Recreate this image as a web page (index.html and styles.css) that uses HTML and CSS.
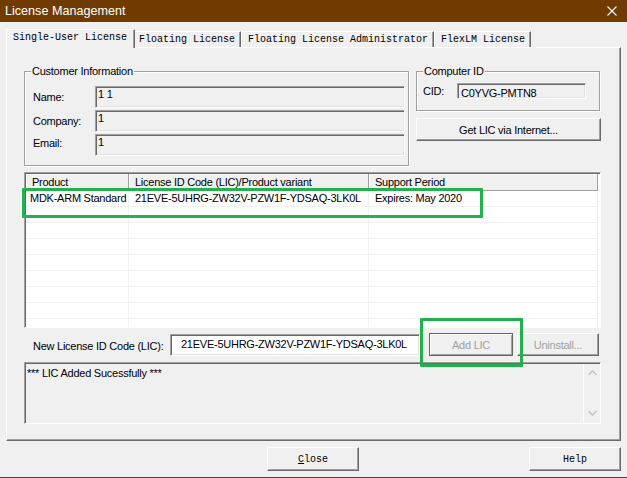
FILE: index.html
```html
<!DOCTYPE html>
<html>
<head>
<meta charset="utf-8">
<title>License Management</title>
<link rel="stylesheet" href="styles.css">
</head>
<body>
<div class="titlebar">
  <span class="title">License Management</span>
  <svg class="close-x" width="10" height="10" viewBox="0 0 10 10"><path d="M0.5 0.5 L9.5 9.5 M9.5 0.5 L0.5 9.5" stroke="#fff" stroke-width="1.1" fill="none"/></svg>
</div>
<div class="tabs">
  <div class="tab active">Single-User License</div>
  <div class="tab">Floating License</div>
  <div class="tab">Floating License Administrator</div>
  <div class="tab">FlexLM License</div>
</div>
<div class="panel">
  <div class="top">
    <div class="group customer">
      <span class="legend">Customer Information</span>
      <div class="form">
        <span class="lbl">Name:</span><div class="field">1 1</div>
        <span class="lbl">Company:</span><div class="field">1</div>
        <span class="lbl email">Email:</span><div class="field">1</div>
      </div>
    </div>
    <div class="rightcol">
      <div class="group computer">
        <span class="legend">Computer ID</span>
        <div class="cidrow"><span class="lbl cidlbl">CID:</span><div class="field cid">C0YVG-PMTN8</div></div>
      </div>
      <button class="btn get">Get LIC via Internet...</button>
    </div>
  </div>
  <div class="list">
    <div class="lrow head"><div>Product</div><div>License ID Code (LIC)/Product variant</div><div>Support Period</div></div>
    <div class="lrow"><div class="first">MDK-ARM Standard</div><div>21EVE-5UHRG-ZW32V-PZW1F-YDSAQ-3LK0L</div><div>Expires: May 2020</div></div>
    <div class="lrow"><div></div><div></div><div></div></div>
    <div class="lrow"><div></div><div></div><div></div></div>
    <div class="lrow"><div></div><div></div><div></div></div>
    <div class="lrow"><div></div><div></div><div></div></div>
    <div class="lrow"><div></div><div></div><div></div></div>
    <div class="lrow"><div></div><div></div><div></div></div>
    <div class="lrow"><div></div><div></div><div></div></div>
    <div class="lrow"><div></div><div></div><div></div></div>
  </div>
  <div class="licrow">
    <span class="lbl liclbl">New License ID Code (LIC):</span>
    <div class="field lic">21EVE-5UHRG-ZW32V-PZW1F-YDSAQ-3LK0L</div>
    <button class="btn add" disabled>Add LIC</button>
    <button class="btn uninstall" disabled>Uninstall...</button>
  </div>
  <div class="status">
    <div class="msg">*** LIC Added Sucessfully ***</div>
    <div class="vscroll">
      <svg width="9" height="6" viewBox="0 0 9 6"><path d="M0.5 5 L4.5 1 L8.5 5" stroke="#c2c2c2" stroke-width="1.3" fill="none"/></svg>
      <svg width="9" height="6" viewBox="0 0 9 6"><path d="M0.5 1 L4.5 5 L8.5 1" stroke="#c2c2c2" stroke-width="1.3" fill="none"/></svg>
    </div>
  </div>
</div>
<div class="footer">
  <button class="btn mbtn"><u>C</u>lose</button>
  <button class="btn mbtn">Help</button>
</div>
<div class="mark mark1"></div>
<div class="mark mark2"></div>
</body>
</html>
```
FILE: styles.css
```css
html, body {
  margin: 0;
  padding: 0;
}
body {
  width: 627px;
  height: 478px;
  box-sizing: border-box;
  background: #f0f0f0;
  position: relative;
  overflow: hidden;
  font-family: "Liberation Sans", Arial, sans-serif;
  font-size: 11px;
  letter-spacing: -0.25px;
  color: #000;
  border-bottom: 1px solid #713b00;
}
.titlebar {
  height: 22px;
  background: #713b00;
  color: #fff;
  display: flex;
  align-items: center;
  justify-content: space-between;
  padding: 0 10px 0 5px;
  font-size: 12.6px;
  letter-spacing: 0;
}
.close-x { display: block; }

.tabs {
  height: 25px;
  box-sizing: border-box;
  display: flex;
  align-items: flex-end;
  padding-left: 6px;
  font-family: "Liberation Mono", "DejaVu Sans Mono", monospace;
  font-size: 10px;
  letter-spacing: 0;
}
.tab {
  box-sizing: border-box;
  height: 16px;
  line-height: 15px;
  padding: 0 5px 0 6px;
  border-top: 1px solid #fff;
  border-left: 1px solid #fff;
  border-right: 1px solid #696969;
  box-shadow: inset -1px 0 #a0a0a0;
  background: #f0f0f0;
  white-space: nowrap;
}
.tab.active {
  height: 19px;
  line-height: 16px;
  padding: 0 7px 0 6px;
  margin-bottom: -1px;
  margin-right: -3px;
  position: relative;
  z-index: 2;
}

.panel {
  box-sizing: border-box;
  margin-left: 6px;
  width: 615px;
  height: 394px;
  border-top: 1px solid #fff;
  border-left: 1px solid #fff;
  border-right: 1px solid #696969;
  border-bottom: 1px solid #696969;
  box-shadow: inset -1px -1px #a0a0a0;
  padding: 23px 19px 0 17px;
}
.top {
  display: grid;
  grid-template-columns: 385px 184px;
  column-gap: 7px;
  height: 95px;
}
.group {
  position: relative;
  box-sizing: border-box;
  border: 1px solid #a0a0a0;
  box-shadow: 1px 1px 0 #fff, inset 1px 1px 0 #fff;
}
.legend {
  position: absolute;
  top: -7px;
  left: 6px;
  padding: 0 1px;
  background: #f0f0f0;
  line-height: 12px;
  white-space: nowrap;
}
.customer {
  height: 95px;
  padding: 14px 0 0 8px;
}
.form {
  display: grid;
  grid-template-columns: 62px 310px;
  grid-auto-rows: 22px;
  row-gap: 2px;
  align-items: center;
}
.lbl { white-space: nowrap; }
.lbl.email { position: relative; top: -2px; }
.field {
  box-sizing: border-box;
  height: 22px;
  border: 1px solid;
  border-color: #a0a0a0 #fff #fff #a0a0a0;
  box-shadow: inset 1px 1px #696969, inset -1px -1px #e3e3e3;
  padding: 0 2px 0 2px;
  line-height: 14px;
  white-space: nowrap;
  overflow: hidden;
}
.rightcol {
  display: flex;
  flex-direction: column;
  gap: 7px;
}
.computer {
  height: 40px;
  padding: 11px 0 0 6px;
}
.cidrow {
  display: flex;
  align-items: center;
}
.cidlbl { width: 34px; }
.field.cid {
  width: 129px;
  height: 16px;
  padding: 3px 0 0 3px;
  line-height: 12px;
}
.btn {
  box-sizing: border-box;
  background: #f0f0f0;
  border: 1px solid;
  border-color: #fff #696969 #696969 #fff;
  box-shadow: inset -1px -1px #a0a0a0;
  font: inherit;
  letter-spacing: inherit;
  color: #000;
  padding: 0;
  margin: 0;
}
.btn:disabled { color: #a0a0a0; }
.get {
  height: 23px;
  width: 185px;
}

.list {
  margin-top: 6px;
  height: 156px;
  box-sizing: border-box;
  border: 1px solid;
  border-color: #a0a0a0 #fff #fff #a0a0a0;
  box-shadow: inset 1px 1px #696969;
  padding: 1px 0 0 1px;
  background: #fff;
  overflow: hidden;
}
.lrow {
  display: grid;
  grid-template-columns: 103px 240px 229px;
  height: 16px;
}
.lrow > div {
  box-sizing: border-box;
  border-right: 1px solid #f0f0f0;
  border-bottom: 1px solid #f0f0f0;
  padding-left: 6px;
  line-height: 15px;
  white-space: nowrap;
  overflow: hidden;
}
.lrow > div.first { padding-left: 4px; }
.lrow.head { height: 17px; }
.lrow.head > div {
  background: #f0f0f0;
  border-right-color: #a0a0a0;
  border-bottom-color: #a0a0a0;
  box-shadow: inset 1px 1px #fff;
  line-height: 16px;
}

.licrow {
  margin-top: 5px;
  height: 23px;
  display: flex;
  align-items: center;
  padding-left: 9px;
}
.liclbl { width: 137px; position: relative; top: 1px; }
.field.lic {
  width: 250px;
  background: #fff;
  padding-left: 10px;
  line-height: 19px;
  margin-right: 9px;
}
.add {
  width: 84px;
  height: 23px;
  border: 1px solid #646464;
  box-shadow: inset 1px 1px #fff, inset -1px -1px #a0a0a0;
  margin-right: 4px;
}
.uninstall {
  width: 82px;
  height: 23px;
}

.status {
  margin-top: 6px;
  height: 62px;
  box-sizing: border-box;
  border: 1px solid;
  border-color: #a0a0a0 #fff #fff #a0a0a0;
  box-shadow: inset 1px 1px #696969;
  padding: 1px 0 0 1px;
  display: flex;
}
.msg {
  flex: 1;
  padding: 3px 0 0 1px;
  line-height: 13px;
}
.vscroll {
  width: 17px;
  box-sizing: border-box;
  border-left: 1px solid #fff;
  display: flex;
  flex-direction: column;
  justify-content: space-between;
  align-items: center;
  padding: 6px 0 7px;
}
.vscroll svg { display: block; }

.footer {
  height: 36px;
  box-sizing: border-box;
  display: flex;
  justify-content: flex-end;
  align-items: flex-start;
  gap: 170px;
  padding: 6px 6px 0 0;
}
.mbtn {
  width: 92px;
  height: 24px;
  font-family: "Liberation Mono", "DejaVu Sans Mono", monospace;
  font-size: 10px;
  letter-spacing: 0;
}

.mark {
  position: absolute;
  box-sizing: border-box;
  border: 3px solid #22b14c;
  border-radius: 1px;
}
.mark1 { left: 22px; top: 188px; width: 461px; height: 30px; }
.mark2 { left: 420px; top: 318px; width: 103px; height: 49px; }
```
